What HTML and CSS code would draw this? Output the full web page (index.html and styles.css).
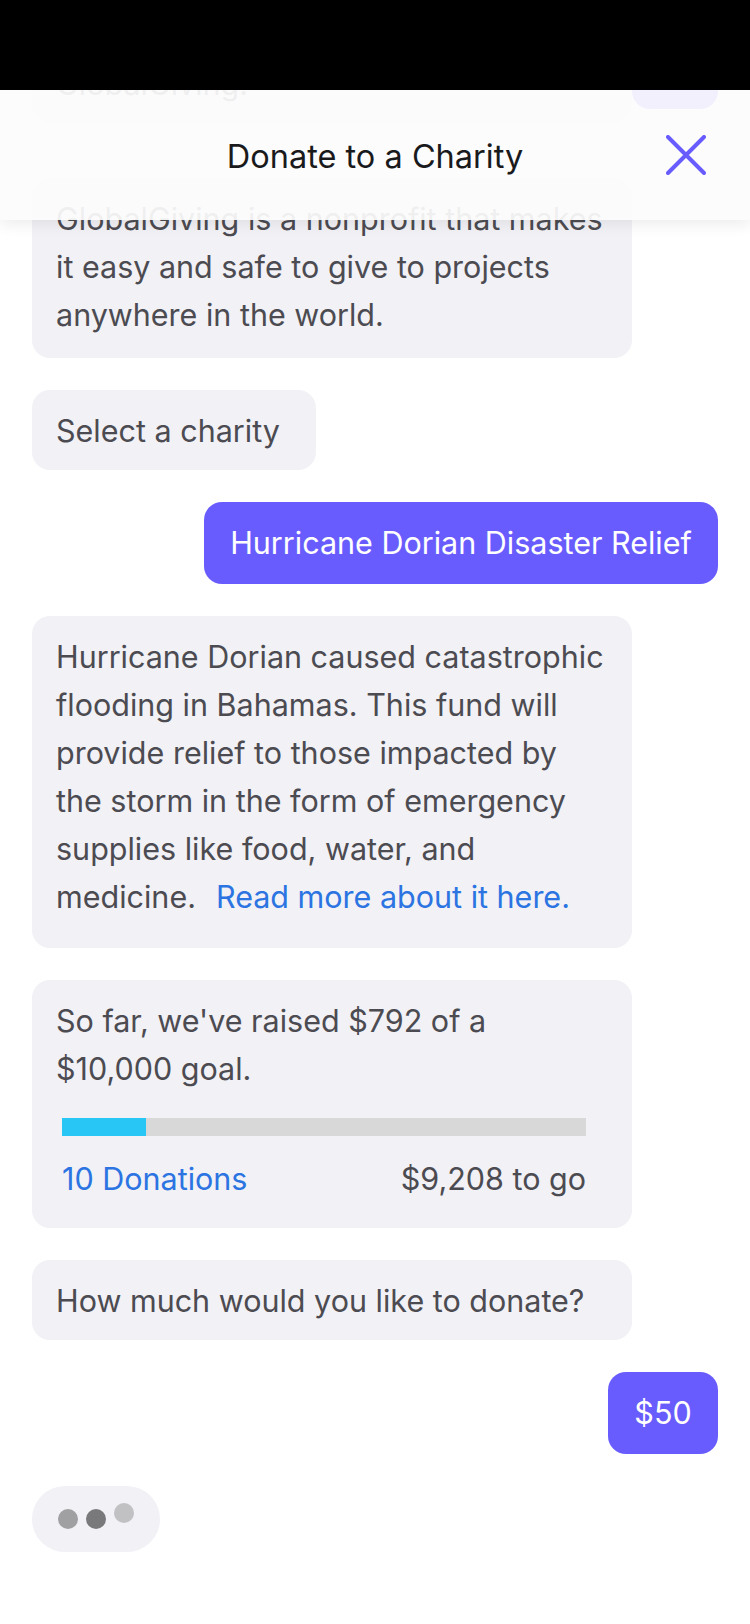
FILE: index.html
```html
<!DOCTYPE html>
<html lang="en">
<head>
<meta charset="utf-8">
<title>Donate to a Charity</title>
<link rel="stylesheet" href="styles.css">
</head>
<body>
<div class="screen">
  <div class="status-bar"></div>
  <header class="nav">
    <span class="nav-spacer"></span>
    <h1 class="nav-title">Donate to a Charity</h1>
    <button class="nav-close" aria-label="Close">
      <svg width="40" height="40" viewBox="0 0 40 40"><path d="M2 2 L38 38 M38 2 L2 38" fill="none" stroke="#695cfe" stroke-width="4" stroke-linecap="round"/></svg>
    </button>
  </header>
  <main class="chat">
    <div class="row row--prev">
      <div class="bubble bubble--bot bubble--wide">We've partnered with<br>GlobalGiving.</div>
      <div class="bubble bubble--ghost"></div>
    </div>

    <div class="bubble bubble--bot bubble--wide bubble--three">GlobalGiving is a nonprofit that makes<br>it easy and safe to give to projects<br>anywhere in the world.</div>

    <div class="bubble bubble--bot bubble--select">Select a charity</div>

    <div class="bubble bubble--user bubble--relief">Hurricane Dorian Disaster Relief</div>

    <div class="bubble bubble--bot bubble--wide bubble--six">Hurricane Dorian caused catastrophic<br>flooding in Bahamas. This fund will<br>provide relief to those impacted by<br>the storm in the form of emergency<br>supplies like food, water, and<br>medicine.<a class="link link--more" href="#">Read more about it here.</a></div>

    <div class="bubble bubble--bot bubble--wide bubble--progress">
      <p class="progress-text">So far, we've raised $792 of a<br>$10,000 goal.</p>
      <div class="progress-track"><div class="progress-fill" style="width:16%"></div></div>
      <div class="progress-footer">
        <a class="link" href="#">10 Donations</a>
        <span>$9,208 to go</span>
      </div>
    </div>

    <div class="bubble bubble--bot bubble--wide">How much would you like to donate?</div>

    <div class="bubble bubble--user bubble--amount">$50</div>

    <div class="typing">
      <span class="dot dot--1"></span>
      <span class="dot dot--2"></span>
      <span class="dot dot--3"></span>
    </div>
  </main>
</div>
</body>
</html>
```

FILE: styles.css
```css
* {
  box-sizing: border-box;
  margin: 0;
  padding: 0;
}

html,
body {
  width: 750px;
  height: 1624px;
  background: #ffffff;
}

body {
  font-family: Inter, "Noto Sans", sans-serif;
  overflow: hidden;
}

.screen {
  position: relative;
  width: 750px;
  height: 1624px;
  overflow: hidden;
  background: #ffffff;
}

.status-bar {
  position: absolute;
  top: 0;
  left: 0;
  right: 0;
  height: 90px;
  background: #000000;
  z-index: 3;
}

.nav {
  position: absolute;
  top: 90px;
  left: 0;
  right: 0;
  height: 130px;
  display: grid;
  grid-template-columns: 1fr auto 1fr;
  align-items: center;
  background: rgba(252, 252, 252, 0.93);
  box-shadow: 0 5px 14px rgba(0, 0, 0, 0.07);
  z-index: 2;
}

.nav-title {
  font-size: 32.5px;
  font-weight: 400;
  line-height: 40px;
  margin-top: 4px;
  color: #1a1a1c;
  white-space: nowrap;
}

.nav-close {
  justify-self: end;
  margin-right: 44px;
  width: 40px;
  height: 40px;
  border: 0;
  background: none;
  display: flex;
}

.chat {
  display: flex;
  flex-direction: column;
  align-items: flex-start;
  gap: 32px;
  padding: 0 32px;
  margin-top: -5px;
}

.row--prev {
  width: 100%;
  display: flex;
  align-items: flex-start;
  justify-content: space-between;
  margin-bottom: 23px;
}

.bubble {
  font-size: 30.5px;
  line-height: 48px;
  border-radius: 18px;
  padding: 17px 24px 15px;
  white-space: nowrap;
}

.bubble--bot {
  color: #4c4b51;
  background: #f1f1f6;
}

.bubble--wide {
  width: 600px;
}

.bubble--ghost {
  width: 86px;
  height: 114px;
  padding: 0;
  background: #695cfe;
}

.bubble--three {
  padding-bottom: 19px;
}

.bubble--six {
  padding-bottom: 27px;
}

.bubble--select {
  width: 284px;
}

.bubble--user {
  align-self: flex-end;
  color: #ffffff;
  background: #695cfe;
  padding: 17px 0;
  text-align: center;
}

.bubble--relief {
  width: 514px;
}

.bubble--amount {
  width: 110px;
}

.link {
  color: #2b74e2;
  text-decoration: none;
}

.link--more {
  margin-left: 20px;
}

.bubble--progress {
  padding: 17px 24px 25px;
}

.progress-track {
  margin: 25px 22px 0 6px;
  height: 18px;
  background: #d8d8d8;
}

.progress-fill {
  height: 100%;
  background: #28c6f4;
}

.progress-footer {
  margin: 19px 22px 0 6px;
  display: flex;
  justify-content: space-between;
}

.typing {
  width: 128px;
  height: 66px;
  border-radius: 33px;
  background: #f1f1f6;
  display: flex;
  align-items: center;
  padding-left: 26px;
  gap: 8px;
}

.dot {
  width: 20px;
  height: 20px;
  border-radius: 50%;
}

.dot--1 {
  background: #a0a0a2;
}

.dot--2 {
  background: #79797b;
}

.dot--3 {
  background: #c1c1c3;
  margin-top: -12px;
}
```
